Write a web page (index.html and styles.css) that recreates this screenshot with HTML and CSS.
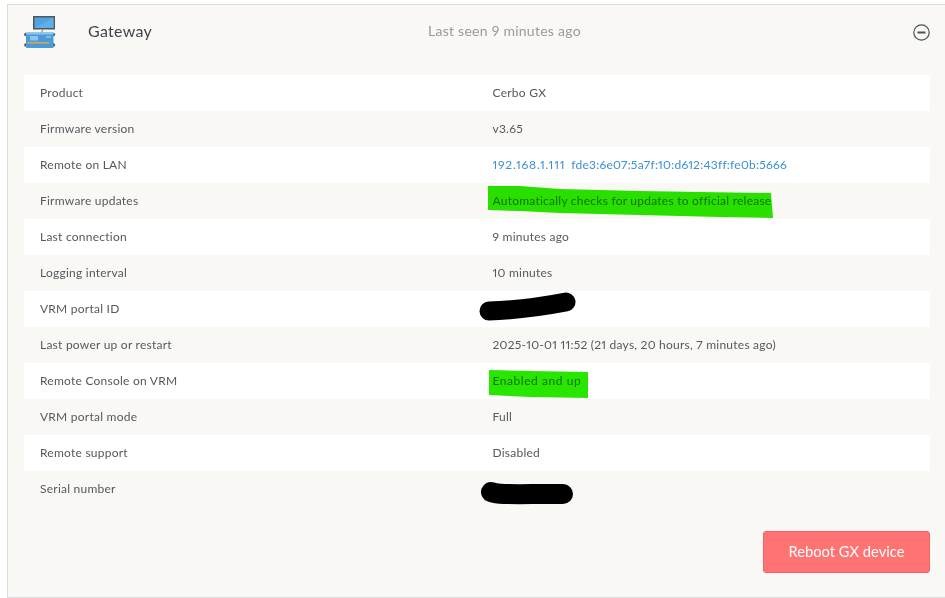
FILE: index.html
```html
<!DOCTYPE html>
<html lang="en">
<head>
<meta charset="utf-8">
<title>Gateway</title>
<link rel="stylesheet" href="styles.css">
</head>
<body>
<section class="card">
  <header class="card-head">
    <svg class="device" width="36" height="36" viewBox="0 0 36 36" aria-hidden="true">
      <rect x="9" y="2" width="22" height="13.500" fill="#50565b"/>
      <path d="M10.500 3.500 H29.500 V14 H10.500 Z" fill="#4ea3e0"/>
      <path d="M10.500 14 L29.500 3.500 V14 Z" fill="#5db0ea"/>
      <path d="M19 15.500 L17 19" stroke="#6d7276" stroke-width="1"/>
      <circle cx="1.800" cy="20.500" r="1.700" fill="#555b60"/>
      <circle cx="29.500" cy="20.500" r="1.700" fill="#555b60"/>
      <circle cx="1.800" cy="31" r="1.700" fill="#555b60"/>
      <circle cx="29.500" cy="31" r="1.700" fill="#555b60"/>
      <rect x="2" y="18.500" width="27.500" height="15.500" rx="1" fill="#4a9bd8"/>
      <rect x="2" y="18.500" width="27.500" height="2" fill="#8cc4ea"/>
      <rect x="6" y="22" width="8" height="4.500" fill="#8cc4ea"/>
      <rect x="22" y="22.500" width="5" height="1" fill="#bcdcf3"/>
      <rect x="3.500" y="28" width="22" height="1.500" fill="#e0a545"/>
    </svg>
    <h2 class="title">Gateway</h2>
    <p class="seen">Last seen 9 minutes ago</p>
    <svg class="toggle" width="17" height="17" viewBox="0 0 17 17" aria-hidden="true">
      <circle cx="8.500" cy="8.500" r="7.700" fill="none" stroke="#4b4f56" stroke-width="1.200"/>
      <rect x="4.500" y="7.500" width="8" height="2" fill="#4b4f56"/>
    </svg>
  </header>

  <dl class="rows">
    <div class="row"><dt>Product</dt><dd>Cerbo GX</dd></div>
    <div class="row"><dt>Firmware version</dt><dd>v3.65</dd></div>
    <div class="row"><dt>Remote on LAN</dt><dd class="links"><a class="ip" href="#">192.168.1.111</a><a href="#">fde3:6e07:5a7f:10:d612:43ff:fe0b:5666</a></dd></div>
    <div class="row"><dt>Firmware updates</dt><dd class="marked">Automatically checks for updates to official release</dd></div>
    <div class="row"><dt>Last connection</dt><dd>9 minutes ago</dd></div>
    <div class="row"><dt>Logging interval</dt><dd>10 minutes</dd></div>
    <div class="row"><dt>VRM portal ID</dt><dd></dd></div>
    <div class="row"><dt>Last power up or restart</dt><dd>2025-10-01 11:52 (21 days, 20 hours, 7 minutes ago)</dd></div>
    <div class="row"><dt>Remote Console on VRM</dt><dd class="marked wide">Enabled and up</dd></div>
    <div class="row"><dt>VRM portal mode</dt><dd>Full</dd></div>
    <div class="row"><dt>Remote support</dt><dd>Disabled</dd></div>
    <div class="row"><dt>Serial number</dt><dd></dd></div>
  </dl>

  <footer class="actions">
    <button class="reboot" type="button">Reboot GX device</button>
  </footer>
</section>

<svg class="marks marks-green" width="945" height="598" viewBox="0 0 945 598" aria-hidden="true">
  <path d="M488 186 L520 186 L560 189 L640 191 L700 192 L771 193 L773 218 L720 217 L640 215 L560 213 L520 211 L488 210 Z" fill="#28e600"/>
  <path d="M489 370 L530 371 L588 372 L588 398 L530 397 L489 395 Z" fill="#28e600"/>
</svg>
<svg class="marks" width="945" height="598" viewBox="0 0 945 598" aria-hidden="true">
  <path d="M489 311 C520 310 545 306 566 302" fill="none" stroke="#000" stroke-width="19" stroke-linecap="round"/>
  <path d="M491 492 C500 495 510 494 563 494" fill="none" stroke="#000" stroke-width="20" stroke-linecap="round"/>
</svg>
</body>
</html>
```
FILE: styles.css
```css
* { box-sizing: border-box; }

html, body {
  margin: 0;
  padding: 0;
  height: 598px;
  overflow: hidden;
  background: #fff;
}

body {
  padding: 4px 0 0 7px;
  font-family: Lato, "Liberation Sans", sans-serif;
  font-variant-numeric: proportional-nums;
  color: #54595e;
}

.card {
  height: 594px;
  background: #faf8f5;
  border: 1px solid #dcdcdc;
  border-right: 0;
  padding: 0 15px 0 16px;
}

.card-head {
  height: 54px;
  margin-bottom: 16px;
  display: flex;
  align-items: center;
}

.device { flex: none; }

.title {
  margin: 0 0 4px 28px;
  width: 340px;
  font-size: 16px;
  font-weight: 400;
  letter-spacing: 0.3px;
  color: #3f444a;
}

.seen {
  margin: 0 0 4px;
  flex: 1;
  font-size: 14px;
  letter-spacing: 0.26px;
  color: #9a9a9a;
}

.toggle { flex: none; }

.rows { margin: 0; }

.row {
  display: flex;
  align-items: center;
  height: 36px;
  padding: 0 16px 2px;
  font-size: 12px;
  letter-spacing: 0.24px;
}

.row:nth-child(odd) { background: #fff; }

dt { width: 452.500px; flex: none; }
dd { margin: 0; }

.marked { color: #75807e; }
.wide { letter-spacing: 0.55px; }

.links { display: flex; gap: 6px; }
.links a { color: #3d8fd6; text-decoration: none; }
.links .ip { letter-spacing: 0.78px; }

.actions {
  display: flex;
  justify-content: flex-end;
  margin-top: 24px;
}

.reboot {
  width: 167px;
  height: 42px;
  padding: 0 0 3px;
  background: #ff7373;
  border: 1px solid #f56565;
  border-radius: 3px;
  color: #fff;
  font-family: Lato, "Liberation Sans", sans-serif;
  font-size: 14.700px;
  font-weight: 400;
}

.marks {
  position: absolute;
  left: 0;
  top: 0;
  pointer-events: none;
}

.marks-green { mix-blend-mode: multiply; }
```
